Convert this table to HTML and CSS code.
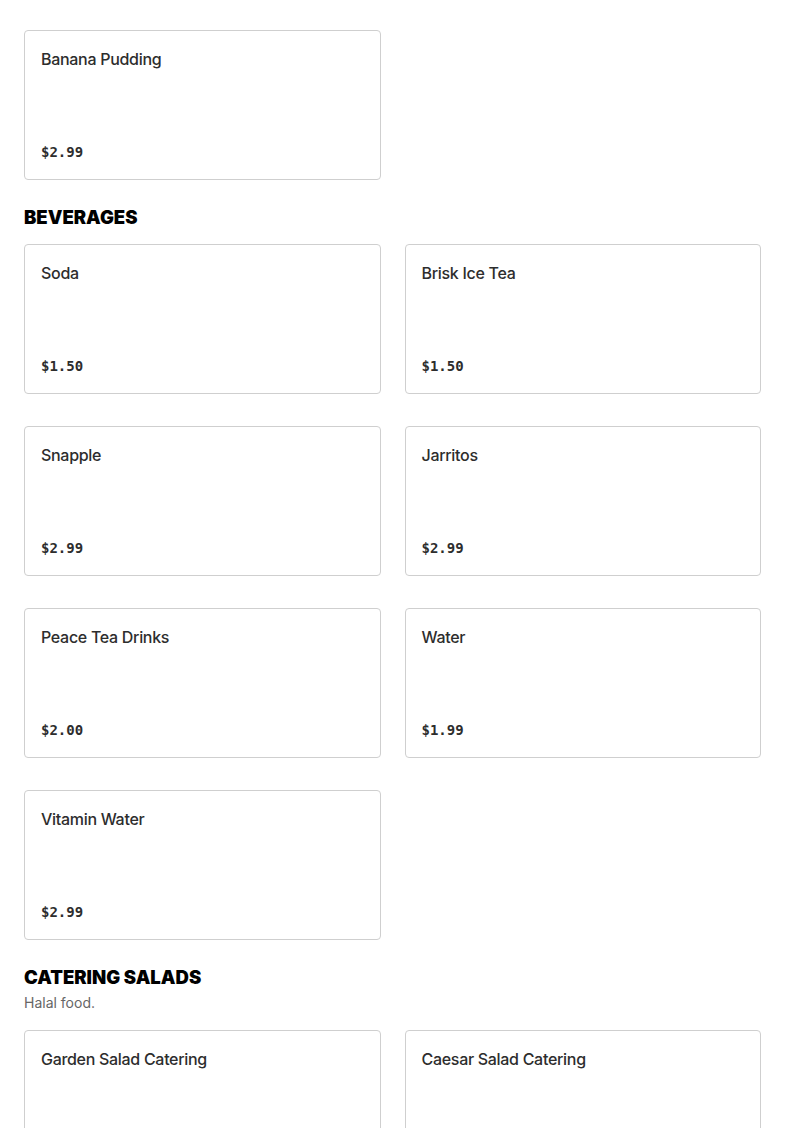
FILE: index.html
```html
<!DOCTYPE html>
<html lang="en">
<head>
<meta charset="utf-8">
<title>Menu</title>
<link rel="stylesheet" href="styles.css">
</head>
<body>
<main class="menu">
  <section class="section">
    <div class="grid">
      <article class="card"><h3 class="card-title">Banana Pudding</h3><p class="price">$2.99</p></article>
    </div>
  </section>
  <section class="section">
    <h2 class="section-title">BEVERAGES</h2>
    <div class="grid">
      <article class="card"><h3 class="card-title">Soda</h3><p class="price">$1.50</p></article>
      <article class="card"><h3 class="card-title">Brisk Ice Tea</h3><p class="price">$1.50</p></article>
      <article class="card"><h3 class="card-title">Snapple</h3><p class="price">$2.99</p></article>
      <article class="card"><h3 class="card-title">Jarritos</h3><p class="price">$2.99</p></article>
      <article class="card"><h3 class="card-title">Peace Tea Drinks</h3><p class="price">$2.00</p></article>
      <article class="card"><h3 class="card-title">Water</h3><p class="price">$1.99</p></article>
      <article class="card"><h3 class="card-title">Vitamin Water</h3><p class="price">$2.99</p></article>
    </div>
  </section>
  <section class="section">
    <h2 class="section-title">CATERING SALADS</h2>
    <p class="section-desc">Halal food.</p>
    <div class="grid">
      <article class="card"><h3 class="card-title">Garden Salad Catering</h3></article>
      <article class="card"><h3 class="card-title">Caesar Salad Catering</h3></article>
    </div>
  </section>
</main>
</body>
</html>
```
FILE: styles.css
```css
* { box-sizing: border-box; }
html, body { margin: 0; padding: 0; background: #fff; }
body { font-family: Inter, "Liberation Sans", sans-serif; color: #2d2d2d; }
.menu { padding: 30px 24px 0; display: flex; flex-direction: column; gap: 24px; }
.section { display: flex; flex-direction: column; }
.section-title {
  margin: 0 0 15px;
  padding-top: 1px;
  font-size: 18.5px;
  line-height: 24px;
  font-weight: 900;
  color: #000;
}
.section-desc {
  margin: -11px 0 17px;
  font-size: 14px;
  line-height: 20px;
  color: #666;
}
.grid {
  display: grid;
  grid-template-columns: 1fr 1fr;
  column-gap: 24px;
  row-gap: 32px;
}
.card {
  height: 150px;
  border: 1px solid #cfcfcf;
  border-radius: 4px;
  padding: 16px;
  display: flex;
  flex-direction: column;
  justify-content: space-between;
}
.card-title {
  margin: 0;
  font-size: 16px;
  line-height: 24px;
  font-weight: 500;
  letter-spacing: -0.3px;
  color: #2d2d2d;
}
.price {
  margin: 0;
  font-family: "DejaVu Sans Mono", "Liberation Mono", monospace;
  font-weight: 700;
  font-size: 14px;
  line-height: 22px;
  color: #2d2d2d;
}
```
